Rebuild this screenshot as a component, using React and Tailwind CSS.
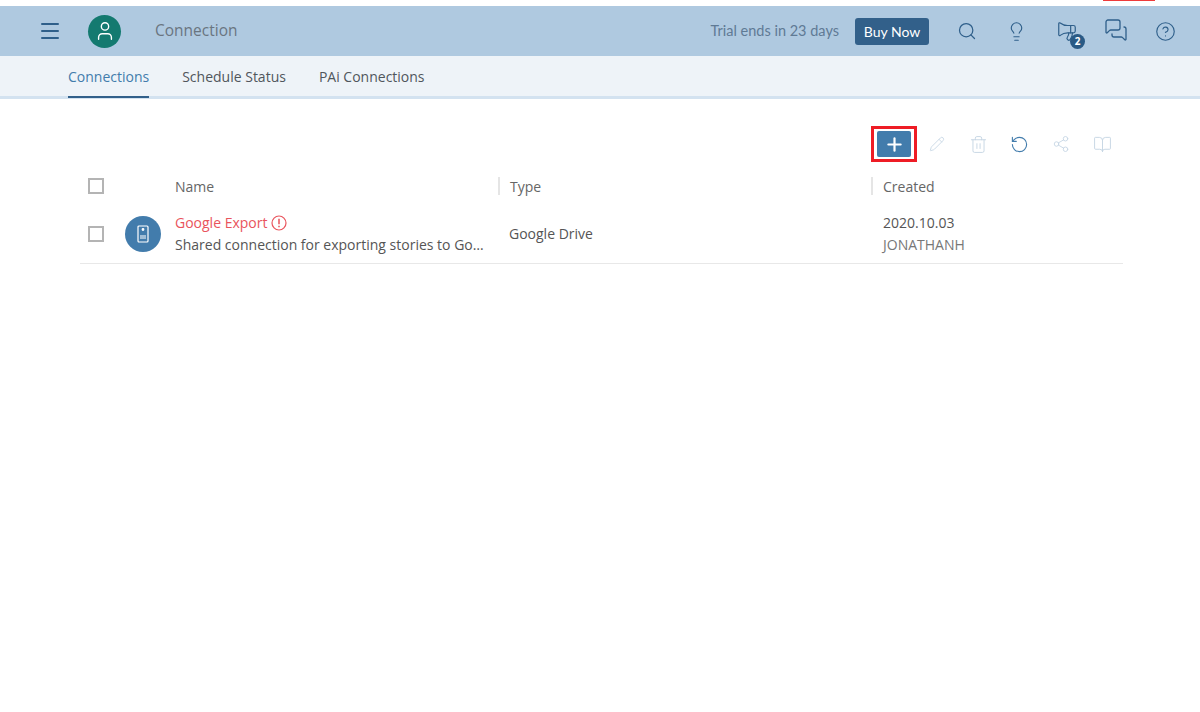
import React from 'react';
import { Menu, Search, Lightbulb, Megaphone, MessagesSquare, CircleHelp, Plus, Pencil, Trash2, RotateCw, Share2, BookOpen, User } from 'lucide-react';

const font = { fontFamily: '"Open Sans", "Noto Sans", sans-serif' };

function TopBar() {
  return (
    <div className="h-[50px] bg-[#afc9e0] flex items-center relative overflow-hidden">
      <div className="flex items-center pl-[38px]">
        <Menu size={24} strokeWidth={2} className="text-[#2f5f8a]" />
        <div className="ml-[26px] w-[33px] h-[33px] rounded-full bg-[#147a70] flex items-center justify-center">
          <User size={22} strokeWidth={1.5} className="text-white" />
        </div>
        <span className="ml-[34px] text-[15.5px] text-[#6a7580]">Connection</span>
      </div>
      <div className="ml-auto flex items-center pr-[24px]">
        <span className="text-[14.5px] text-[#5f7a95] font-['Lato']">Trial ends in 23 days</span>
        <button className="ml-[16px] w-[74px] h-[27px] rounded-[3px] bg-[#32608a] text-white text-[14px] font-['Lato'] flex items-center justify-center">Buy Now</button>
        <Search size={20} strokeWidth={1.5} className="ml-[28px] text-[#2f5f8a]" />
        <Lightbulb size={21} strokeWidth={1.3} className="ml-[29px] text-[#2f5f8a]" />
        <div className="ml-[29px] relative">
          <Megaphone size={22} strokeWidth={1.3} className="text-[#2f5f8a] -scale-x-100" />
          <span className="absolute left-[14px] top-[14px] w-[15px] h-[15px] rounded-full bg-[#2a5a85] text-white text-[10px] font-bold flex items-center justify-center">2</span>
        </div>
        <MessagesSquare size={24} strokeWidth={1.3} className="ml-[26px] -mt-[2px] text-[#2f5f8a]" />
        <CircleHelp size={21} strokeWidth={1.3} className="ml-[27px] text-[#2f5f8a]" />
      </div>
    </div>
  );
}

function Tabs() {
  return (
    <div className="h-[40px] bg-[#eef3f8] border-b-[3px] border-[#d3e2f0] box-content flex pl-[68px] gap-[33px] text-[14px]">
      <div className="h-[42px] border-b-[2px] border-[#32608a] text-[#427cac] flex items-center">Connections</div>
      <div className="text-[#50565c] flex items-center">Schedule Status</div>
      <div className="text-[#50565c] flex items-center">PAi Connections</div>
    </div>
  );
}

function Toolbar() {
  return (
    <div className="flex items-center h-[36px] pl-[871px]">
      <div className="w-[46px] h-[36px] border-[3px] border-[#ee1c25] flex items-center justify-center">
        <div className="w-[34px] h-[26px] rounded-[2px] bg-[#427cac] flex items-center justify-center">
          <Plus size={21} strokeWidth={2.5} className="text-white" />
        </div>
      </div>
      <Pencil size={16} strokeWidth={1.3} className="ml-[12px] text-[#c6d6e4]" />
      <Trash2 size={19} strokeWidth={1.2} className="ml-[24px] text-[#c6d6e4]" />
      <RotateCw size={19} strokeWidth={1.4} className="ml-[22px] text-[#427cac] -scale-y-100 rotate-180" />
      <Share2 size={18} strokeWidth={1.2} className="ml-[23px] text-[#c6d6e4]" />
      <BookOpen size={19} strokeWidth={1.2} className="ml-[23px] text-[#c6d6e4]" />
    </div>
  );
}

function Checkbox() {
  return <div className="w-[16px] h-[16px] border-2 border-[#b4b4b4] bg-white" />;
}

function Table() {
  return (
    <div className="ml-[80px] w-[1043px] mt-[4px] text-[14px]">
      <div className="h-[40px] grid grid-cols-[95px_323px_373px_1fr] items-center text-[#666]">
        <div className="pl-[8px]"><Checkbox /></div>
        <div>Name</div>
        <div className="border-l-2 border-[#e5e5e5] pl-[10px] h-[18px] flex items-center">Type</div>
        <div className="border-l-2 border-[#e5e5e5] pl-[10px] h-[18px] flex items-center">Created</div>
      </div>
      <div className="h-[58px] grid grid-cols-[95px_323px_373px_1fr] items-center border-b border-[#e8e8e8] pb-[2px]">
        <div className="pl-[8px] flex items-center">
          <Checkbox />
          <div className="ml-[21px] w-[36px] h-[36px] rounded-full bg-[#427cac] flex items-center justify-center">
            <svg width="12" height="18" viewBox="0 0 12 18" fill="none" stroke="white" strokeWidth="1.2">
              <rect x="1" y="1" width="10" height="16" rx="1" />
              <circle cx="6" cy="4.5" r="0.8" fill="white" />
              <path d="M3 11h6M3 13h6" />
            </svg>
          </div>
        </div>
        <div>
          <div className="flex items-center text-[#e9545c]">
            Google Export
            <svg className="ml-[4px]" width="16" height="16" viewBox="0 0 16 16" fill="none" stroke="#e9545c" strokeWidth="1.2">
              <circle cx="8" cy="8" r="7" />
              <path d="M8 3.8v5.4M8 10.8v1.4" strokeWidth="1.5" />
            </svg>
          </div>
          <div className="text-[#555] truncate w-[310px] mt-[1px]">Shared connection for exporting stories to Google Drive</div>
        </div>
        <div className="pl-[11px] text-[#555]">Google Drive</div>
        <div className="pl-[12px] leading-[22px]">
          <div className="text-[#555]">2020.10.03</div>
          <div className="text-[#777]">JONATHANH</div>
        </div>
      </div>
    </div>
  );
}

export default function App() {
  return (
    <div className="min-h-[712px] bg-white" style={font}>
      <div className="h-[6px] flex">
        <div className="ml-[1103px] w-[52px] h-[1px] bg-[#ee3b3b]" />
      </div>
      <TopBar />
      <Tabs />
      <div className="pt-[27px]">
        <Toolbar />
        <Table />
      </div>
    </div>
  );
}
